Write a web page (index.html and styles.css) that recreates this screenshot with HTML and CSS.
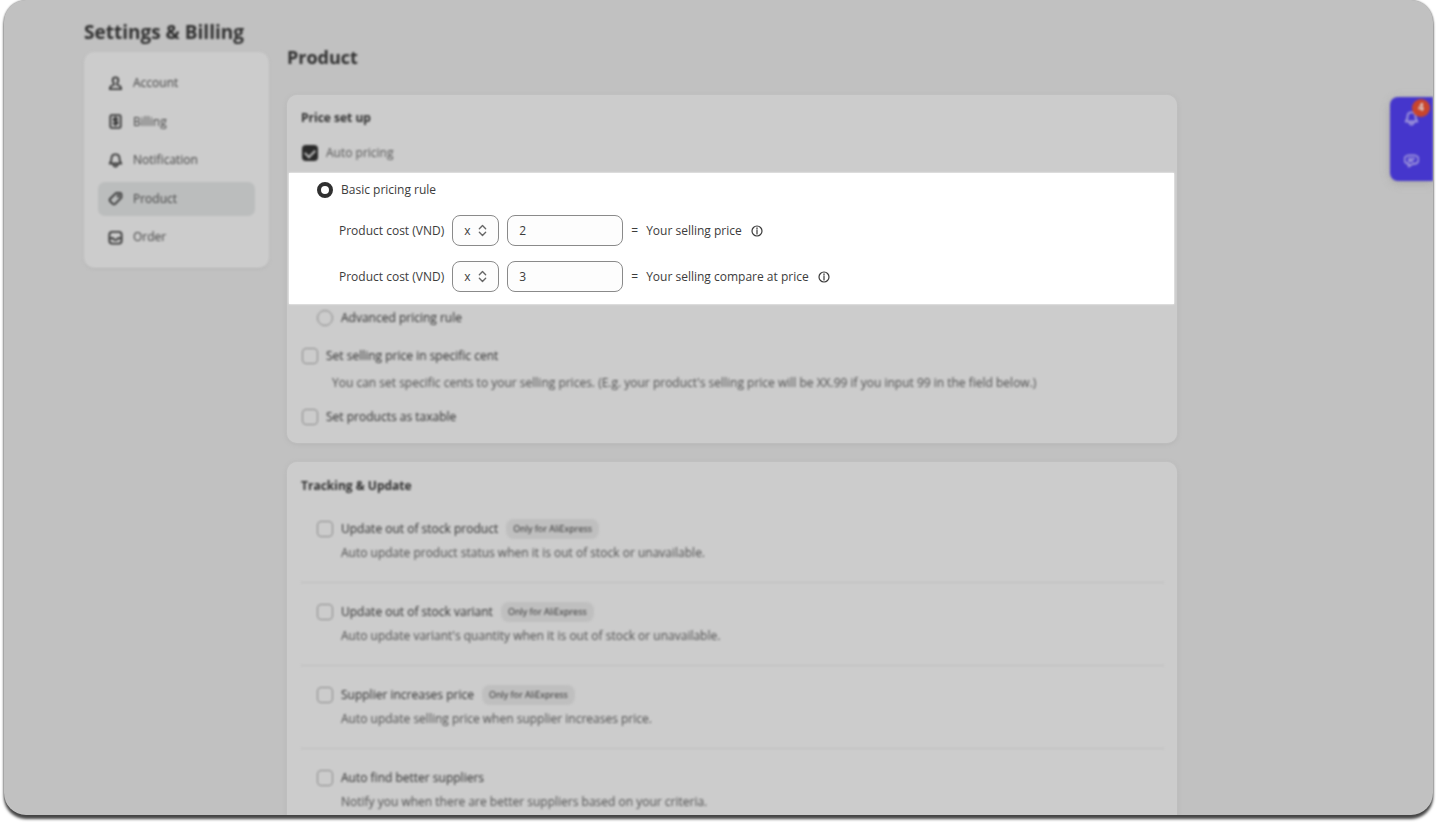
FILE: index.html
```html
<!DOCTYPE html>
<html lang="en">
<head>
<meta charset="UTF-8">
<title>Settings &amp; Billing</title>
<link rel="stylesheet" href="styles.css">
</head>
<body>

<div class="frame">
	<div class="page">

		<!-- side menu -->
		<aside class="sidebar">
			<h1 class="pageTitle soft">Settings &amp; Billing</h1>
			<nav class="menu soft">
				<a href="#account"><svg viewBox="0 0 16 16"><path d="M8 1.500a3 3 0 0 1 3 3c0 1.600-.8 2.600-1.300 3.400v1.600c2.800.6 4.300 1.600 4.300 4.500H2c0-2.900 1.500-3.900 4.300-4.500V7.900C5.800 7.100 5 6.100 5 4.500a3 3 0 0 1 3-3z"/></svg>Account</a>
				<a href="#billing"><svg viewBox="0 0 16 16"><rect x="2.500" y="1.200" width="11" height="13.600" rx="1.500"/><path d="M10 5.300c-.4-.7-1-.9-2-.9-2.600 0-2.600 3 0 3.200 2.800.3 2.800 3.500 0 3.500-1 0-1.700-.4-2.100-1.100M8 3.500v8.500"/></svg>Billing</a>
				<a href="#notification"><svg viewBox="0 0 16 16"><path d="M8 1.500c-2.700 0-4.300 1.900-4.300 4.500 0 2.800-.7 3.300-1.900 5.200h12.400c-1.200-1.900-1.900-2.400-1.900-5.200 0-2.600-1.600-4.500-4.300-4.500zM5.800 11.500c0 4 4.400 4 4.400 0"/></svg>Notification</a>
				<a href="#product" class="active"><svg viewBox="0 0 16 16"><path d="M8.800 2h3.700A1.800 1.800 0 0 1 14.300 3.800v3.300L7.700 13.700a1.800 1.800 0 0 1-2.600 0L2.300 10.900a1.800 1.800 0 0 1 0-2.600z"/><circle cx="11" cy="5.200" r=".7"/></svg>Product</a>
				<a href="#order"><svg viewBox="0 0 16 16"><rect x="1.500" y="2" width="13" height="12.500" rx="3"/><path d="M2 8.800h3.600c.3 2.400 4.500 2.400 4.800 0H14"/></svg>Order</a>
			</nav>
		</aside>

		<main class="content">
			<h2 class="sectionTitle soft">Product</h2>

			<!-- price set up -->
			<section class="card priceCard">
				<h3 class="soft">Price set up</h3>
				<label class="option auto soft"><input type="checkbox" checked>Auto pricing</label>

				<div class="spotlight">
					<label class="option"><input type="radio" name="rule" checked>Basic pricing rule</label>
					<div class="formula">
						<label for="price">Product cost (VND)</label>
						<span class="operator">
							<select aria-label="Price operator"><option>x</option><option>+</option></select>
							<svg viewBox="0 0 10 14"><path d="M1.500 5 5 1.500 8.500 5M1.500 9 5 12.500 8.500 9"/></svg>
						</span>
						<input class="amount" id="price" type="text" value="2">
						<span class="equal">=</span>
						<span>Your selling price</span>
						<svg class="info" viewBox="0 0 12 12"><circle cx="6" cy="6" r="5"/><path d="M6 5.300v3.700M6 2.800v1.300"/></svg>
					</div>
					<div class="formula">
						<label for="compare">Product cost (VND)</label>
						<span class="operator">
							<select aria-label="Compare at price operator"><option>x</option><option>+</option></select>
							<svg viewBox="0 0 10 14"><path d="M1.500 5 5 1.500 8.500 5M1.500 9 5 12.500 8.500 9"/></svg>
						</span>
						<input class="amount" id="compare" type="text" value="3">
						<span class="equal">=</span>
						<span>Your selling compare at price</span>
						<svg class="info" viewBox="0 0 12 12"><circle cx="6" cy="6" r="5"/><path d="M6 5.300v3.700M6 2.800v1.300"/></svg>
					</div>
				</div>

				<label class="option advanced soft"><input type="radio" name="rule">Advanced pricing rule</label>
				<label class="option cents soft"><input type="checkbox">Set selling price in specific cent</label>
				<p class="hint soft">You can set specific cents to your selling prices. (E.g. your product's selling price will be XX.99 if you input 99 in the field below.)</p>
				<label class="option taxable soft"><input type="checkbox">Set products as taxable</label>
			</section>

			<!-- tracking -->
			<section class="card trackCard">
				<h3 class="soft">Tracking &amp; Update</h3>
				<div class="track soft">
					<label class="option"><input type="checkbox">Update out of stock product <span class="tag">Only for AliExpress</span></label>
					<p>Auto update product status when it is out of stock or unavailable.</p>
				</div>
				<div class="track soft">
					<label class="option"><input type="checkbox">Update out of stock variant <span class="tag">Only for AliExpress</span></label>
					<p>Auto update variant's quantity when it is out of stock or unavailable.</p>
				</div>
				<div class="track soft">
					<label class="option"><input type="checkbox">Supplier increases price <span class="tag">Only for AliExpress</span></label>
					<p>Auto update selling price when supplier increases price.</p>
				</div>
				<div class="track soft">
					<label class="option"><input type="checkbox">Auto find better suppliers</label>
					<p>Notify you when there are better suppliers based on your criteria.</p>
				</div>
			</section>
		</main>
	</div>

	<!-- floating buttons -->
	<div class="widget soft">
		<button type="button" aria-label="Notifications">
			<svg viewBox="0 0 16 16"><path d="M8 1.500c-2.700 0-4.300 1.900-4.300 4.500 0 2.800-.7 3.300-1.900 5.200h12.400c-1.200-1.900-1.900-2.400-1.900-5.200 0-2.600-1.600-4.500-4.300-4.500zM5.800 11.500c0 4 4.400 4 4.400 0"/></svg>
			<span class="count">4</span>
		</button>
		<button type="button" aria-label="Chat">
			<svg viewBox="0 0 16 16"><path d="M5 2.500h6a4 4 0 0 1 0 9H9.500L5 14.500v-3a4.500 4.500 0 0 1 0-9zM5 6h6M5 8.500h4"/></svg>
		</button>
	</div>
</div>

</body>
</html>
```
FILE: styles.css
```css
* {
	box-sizing: border-box;
}

html, body {
	height: 100%;
	margin: 0;
}

body {
	padding: 0 4px 8px;
	overflow: hidden;
	background: #fff;
	font-family: "Segoe UI", "Open Sans", sans-serif;
	font-size: 12px;
	line-height: 20px;
	color: #303030;
}

h1, h2, h3, p {
	margin: 0;
}

.frame {
	position: relative;
	height: 100%;
	overflow: hidden;
	border-radius: 22px;
	background: #c1c1c1;
	box-shadow: 0 4px 3px #444, 0 0 2px #777;
}

.page {
	display: flex;
	align-items: flex-start;
	gap: 18px;
	padding: 20px 256px 0 80px;
}

/* everything outside the highlighted area */
.soft {
	filter: blur(1px);
}

/* side menu */
.sidebar {
	flex: none;
	width: 185px;
}

.pageTitle {
	font-size: 19px;
	line-height: 24px;
	white-space: nowrap;
}

.menu {
	display: flex;
	flex-direction: column;
	justify-content: space-between;
	height: 216px;
	margin-top: 8px;
	padding: 14px;
	border-radius: 10px;
	background: #ccc;
	box-shadow: 0 1px 2px #b0b0b0;
}

.menu a {
	display: flex;
	align-items: center;
	gap: 10px;
	height: 34px;
	padding: 0 10px;
	border-radius: 7px;
	color: #444;
	text-decoration: none;
}

.menu a.active {
	background: #bbbdbd;
}

svg {
	fill: none;
	stroke: #3a3a3a;
	stroke-width: 1.5;
	stroke-linecap: round;
	stroke-linejoin: round;
}

.menu svg {
	width: 15px;
	height: 15px;
	stroke-width: 2;
}

/* cards */
.content {
	flex: 1;
	min-width: 0;
}

.sectionTitle {
	margin-top: 25px;
	font-size: 18px;
	line-height: 24px;
}

.card {
	border-radius: 10px;
	background: #ccc;
	box-shadow: 0 0 2px #ccc, 0 1px 5px #b0b0b0;
}

.card h3 {
	margin-left: 14px;
	font-size: 12px;
	line-height: 20px;
}

.priceCard {
	margin-top: 26px;
	padding: 13px 0 16px;
}

.option {
	display: flex;
	align-items: center;
	gap: 8px;
	height: 20px;
	margin-left: 15px;
}

.option input {
	flex: none;
	appearance: none;
	width: 16px;
	height: 16px;
	margin: 0;
	border: 1px solid #8a8a8a;
	border-radius: 4px;
}

.option input[type="radio"] {
	border-radius: 50%;
}

.option input[type="radio"]:checked {
	border: 4px solid #303030;
}

.option input[type="checkbox"]:checked {
	display: grid;
	place-items: center;
	border: none;
	background: #2a2a2a;
}

.option input[type="checkbox"]:checked::before {
	content: "";
	width: 8px;
	height: 5px;
	border: solid #bbb;
	border-width: 0 0 2px 2px;
	transform: translateY(-1px) rotate(-45deg);
}

.auto {
	margin-top: 15px;
	color: #555;
}

.spotlight {
	display: flex;
	flex-direction: column;
	gap: 15px;
	margin: 10px 3px 0 2px;
	padding: 7px 0 12px 28px;
	background: #fff;
	box-shadow: 0 0 2px #fff;
	color: #3c3c3c;
}

.spotlight .option {
	margin-left: 0;
}

.formula {
	display: flex;
	align-items: center;
	height: 31px;
	padding-left: 22px;
}

.operator {
	position: relative;
	margin: 0 8px;
}

.operator select {
	display: block;
	appearance: none;
	width: 47px;
	height: 31px;
	padding: 0 11px;
	border: 1px solid #8a8a8a;
	border-radius: 8px;
	background: #fdfdfd;
	color: #3c3c3c;
	font: inherit;
}

.operator svg {
	position: absolute;
	top: 9px;
	right: 12px;
	width: 9px;
	height: 13px;
	stroke: #666;
	pointer-events: none;
}

.amount {
	width: 116px;
	height: 31px;
	padding: 0 11px;
	border: 1px solid #8a8a8a;
	border-radius: 8px;
	background: #fdfdfd;
	color: #3c3c3c;
	font: inherit;
}

.equal {
	margin: 0 8px;
}

.info {
	width: 12px;
	height: 12px;
	margin-left: 9px;
	stroke-width: 1.2;
}

.advanced {
	margin: 4px 0 0 30px;
}

.cents {
	margin-top: 18px;
}

.hint {
	margin: 7px 0 0 45px;
	color: #505050;
}

.taxable {
	margin-top: 14px;
}

/* tracking */
.trackCard {
	margin-top: 19px;
	padding-top: 14px;
}

.trackCard h3 {
	margin-bottom: 4px;
}

.track {
	margin: 0 13px 0 14px;
	padding: 19px 0 19px 16px;
	border-bottom: 1px solid #bdbdbd;
}

.track .option {
	margin-left: 0;
}

.track p {
	margin: 4px 0 0 24px;
	color: #505050;
}

.tag {
	padding: 0 7px;
	border-radius: 8px;
	background: #bfbfbf;
	font-size: 9px;
}

/* floating buttons */
.widget {
	position: absolute;
	top: 97px;
	right: 0;
	display: flex;
	flex-direction: column;
	width: 43px;
	height: 84px;
	border-radius: 8px 0 0 8px;
	background: #4536cc;
	box-shadow: 0 2px 8px #a8a8a8;
}

.widget button {
	position: relative;
	display: grid;
	place-items: center;
	flex: 1;
	padding: 0;
	border: none;
	background: none;
}

.widget svg {
	width: 15px;
	height: 15px;
	stroke: #a198dc;
	stroke-width: 2;
}

.count {
	position: absolute;
	top: 2px;
	right: 3px;
	width: 18px;
	height: 18px;
	border-radius: 50%;
	background: #c9452c;
	color: #ddd;
	font-size: 10px;
	font-weight: bold;
	line-height: 18px;
	text-align: center;
}
```
